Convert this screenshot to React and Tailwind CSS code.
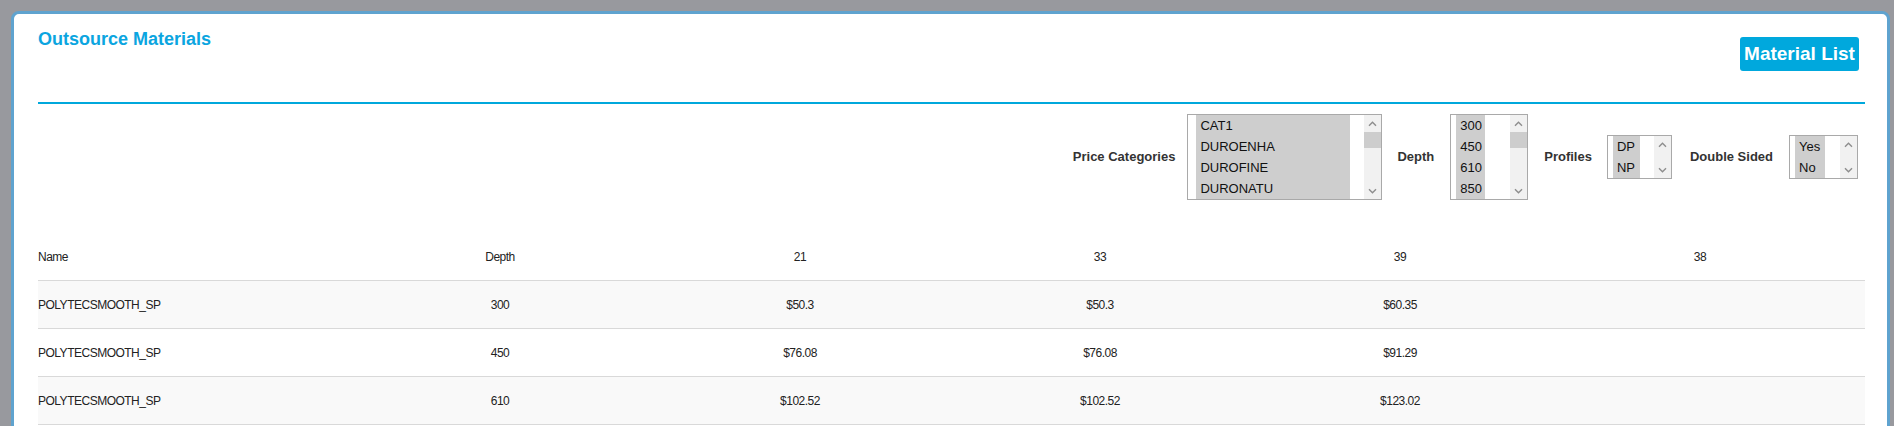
import React from "react";

const FONT = { fontFamily: '"Liberation Sans", Arial, sans-serif' };

function Chevron({ up }) {
  return (
    <svg width="9" height="6" viewBox="0 0 9 6" className="block">
      {up ? (
        <polyline points="1,4.8 4.5,1.3 8,4.8" fill="none" stroke="#8d8d8d" strokeWidth="1.4" />
      ) : (
        <polyline points="1,1.2 4.5,4.7 8,1.2" fill="none" stroke="#8d8d8d" strokeWidth="1.4" />
      )}
    </svg>
  );
}

function ListBox({ boxW, boxH, optW, pl, items, thumb }) {
  return (
    <div
      className="flex shrink-0 border border-[#a9a9a9] bg-white font-normal"
      style={{ width: boxW, height: boxH }}
    >
      <div className="flex flex-1" style={{ paddingLeft: pl }}>
        <div className="flex flex-col" style={{ width: optW }}>
          {items.map((it) => (
            <div
              key={it}
              className="h-[21px] shrink-0 bg-[#cecece] pl-[4px] text-[13px] leading-[21px] text-[#111]"
            >
              {it}
            </div>
          ))}
        </div>
      </div>
      <div className="flex w-[17px] shrink-0 flex-col bg-[#f1f1f1]">
        <div className="flex h-[17px] shrink-0 items-center justify-center">
          <Chevron up />
        </div>
        {thumb && <div className="h-[16px] w-full shrink-0 bg-[#cdcdcd]" />}
        <div className="flex-1" />
        <div className="flex h-[17px] shrink-0 items-center justify-center">
          <Chevron />
        </div>
      </div>
    </div>
  );
}

const rows = [
  ["POLYTECSMOOTH_SP", "300", "$50.3", "$50.3", "$60.35", ""],
  ["POLYTECSMOOTH_SP", "450", "$76.08", "$76.08", "$91.29", ""],
  ["POLYTECSMOOTH_SP", "610", "$102.52", "$102.52", "$123.02", ""],
];

const GRID = "grid grid-cols-[312px_300px_300px_300px_300px_300px_1fr]";

export default function App() {
  return (
    <div className="h-[426px] w-full overflow-hidden bg-[#98999e] pt-[11px] pl-[11px]" style={FONT}>
      <div className="h-[600px] w-[1879px] rounded-[8px] border-[3px] border-[#5fa3cf] bg-white pl-[24px] pr-[22px]">
        {/* header */}
        <div className="flex h-[88px] items-start justify-between">
          <div className="pt-[15px] text-[18px] font-bold leading-[20px] text-[#0ba5e0]">
            Outsource Materials
          </div>
          <button className="mr-[6px] mt-[23px] flex h-[34px] w-[119px] items-center justify-center rounded-[3px] bg-[#00a8dd] text-[19px] font-bold text-white">
            Material List
          </button>
        </div>
        <div className="h-[2px] bg-[#00a8dc]" />

        {/* filters */}
        <div className="mt-[10px] flex h-[86px] items-center justify-end pr-[7px] text-[13px] font-bold text-[#333]">
          <span className="mr-[12px]">Price Categories</span>
          <ListBox
            boxW={195}
            boxH={86}
            pl={8}
            optW={154}
            thumb
            items={["CAT1", "DUROENHA", "DUROFINE", "DURONATU"]}
          />
          <span className="ml-[15px] mr-[16px]">Depth</span>
          <ListBox boxW={78} boxH={86} pl={5} optW={29} thumb items={["300", "450", "610", "850"]} />
          <span className="ml-[16px] mr-[15px]">Profiles</span>
          <ListBox boxW={65} boxH={44} pl={5} optW={27} items={["DP", "NP"]} />
          <span className="ml-[18px] mr-[16px]">Double Sided</span>
          <ListBox boxW={69} boxH={44} pl={5} optW={30} items={["Yes", "No"]} />
        </div>

        {/* table */}
        <div className="mt-[33px] text-[12px] tracking-[-0.5px] text-[#222]">
          <div className={`${GRID} h-[48px] items-center border-b border-[#d9d9d9]`}>
            <div>Name</div>
            <div className="text-center">Depth</div>
            <div className="text-center">21</div>
            <div className="text-center">33</div>
            <div className="text-center">39</div>
            <div className="text-center">38</div>
          </div>
          {rows.map((r, i) => (
            <div
              key={i}
              className={`${GRID} h-[48px] items-center border-b border-[#d9d9d9] ${
                i % 2 === 0 ? "bg-[#f9f9f9]" : "bg-white"
              }`}
            >
              <div>{r[0]}</div>
              <div className="text-center">{r[1]}</div>
              <div className="text-center">{r[2]}</div>
              <div className="text-center">{r[3]}</div>
              <div className="text-center">{r[4]}</div>
              <div className="text-center">{r[5]}</div>
            </div>
          ))}
        </div>
      </div>
    </div>
  );
}
